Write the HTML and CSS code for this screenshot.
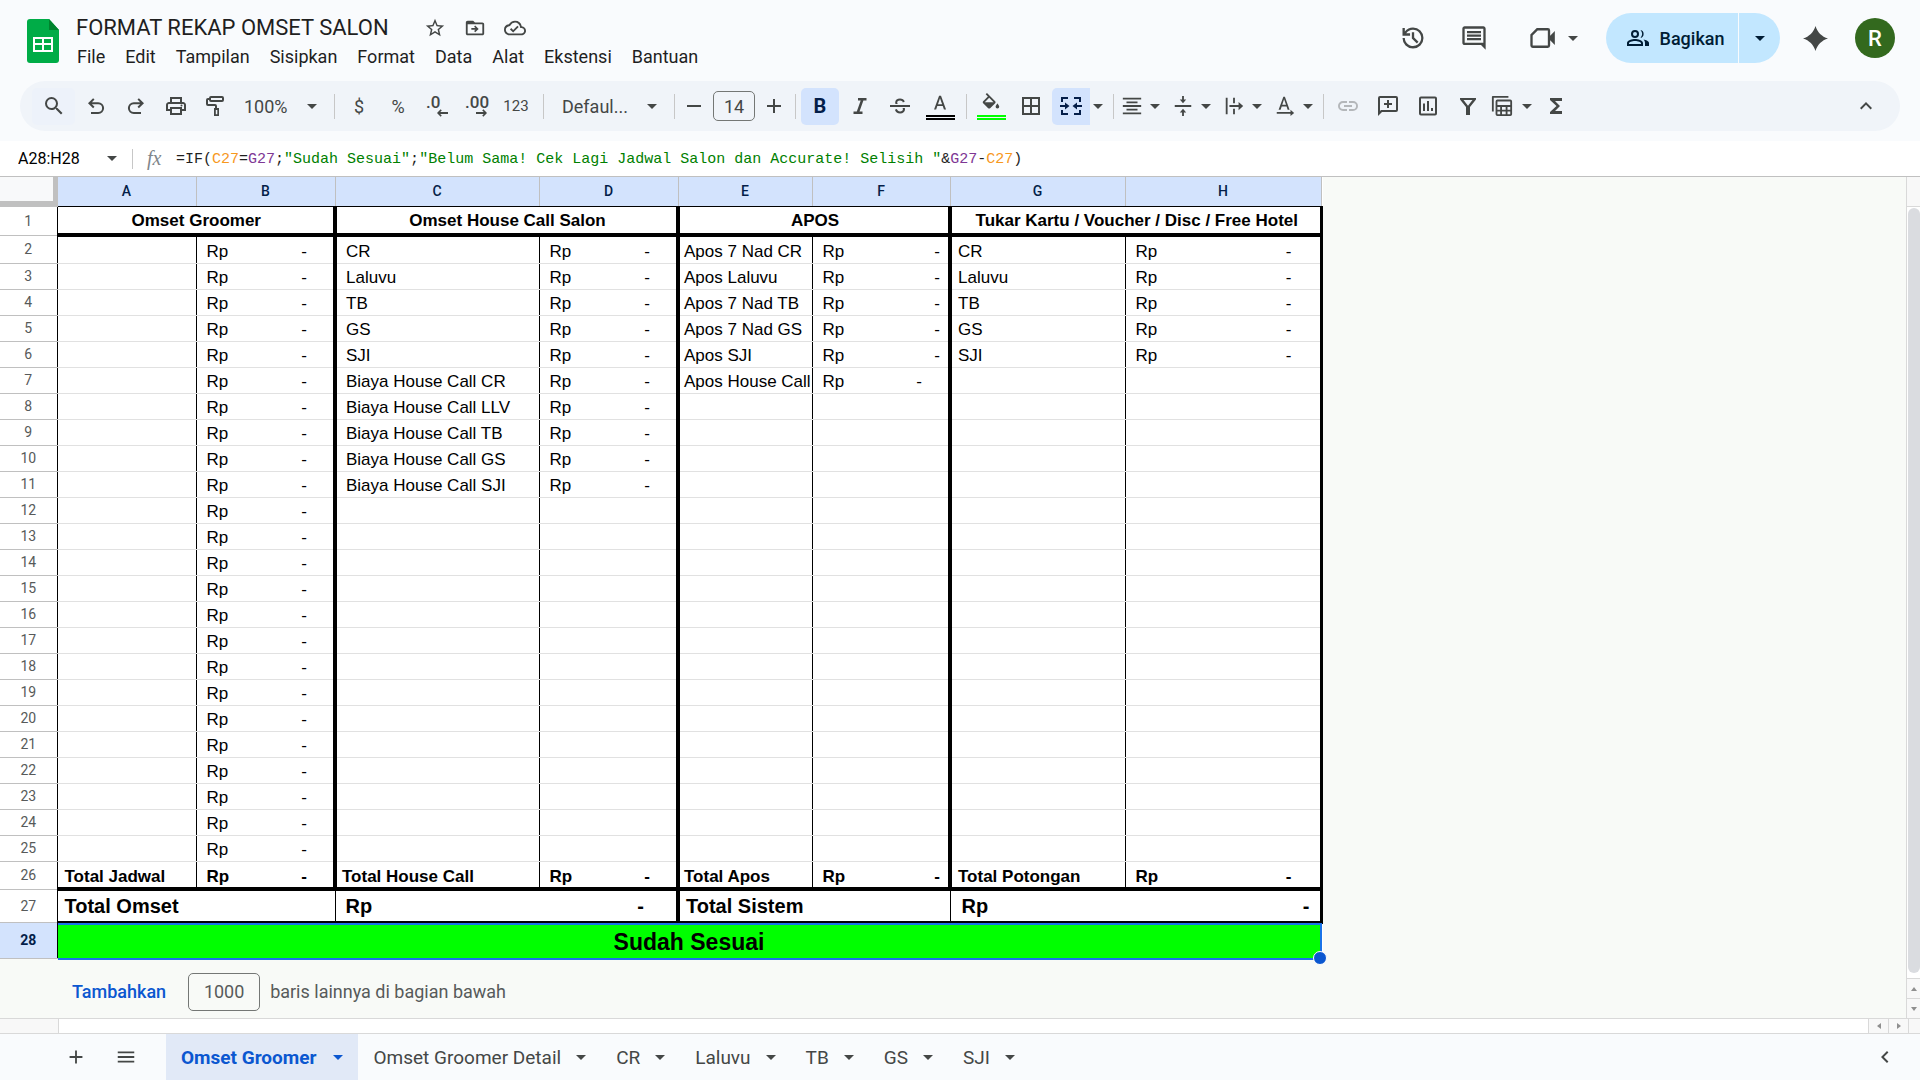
FILE: index.html
```html
<!DOCTYPE html>
<html lang="id">
<head>
  <meta charset="UTF-8" />
  <meta name="viewport" content="width=device-width, initial-scale=1.0"/>
  <title>FORMAT REKAP OMSET SALON</title>
  <link rel="stylesheet" href="styles.css">
</head>
<body>

  <header class="header">
    <svg class="logo" viewBox="0 0 32 44">
      <path fill="#00ac47" d="M3 0h19l10 11v30a3 3 0 0 1-3 3H3a3 3 0 0 1-3-3V3a3 3 0 0 1 3-3z"/>
      <path fill="#00832d" d="M22 0l10 11H22z"/>
      <path fill="#fff" fill-rule="evenodd" d="M6 18h20v15H6zM8 20v4h7v-4zM17 20v4h7v-4zM8 26v5h7v-5zM17 26v5h7v-5z"/>
    </svg>

    <div class="doc">
      <div class="title-row">
        <h1>FORMAT REKAP OMSET SALON</h1>
        <button class="mini" aria-label="Bintangi">
          <svg viewBox="0 0 24 24"><path d="M22 9.24l-7.19-.62L12 2 9.19 8.63 2 9.24l5.46 4.73L5.82 21 12 17.27 18.18 21l-1.63-7.03L22 9.24zM12 15.4l-3.76 2.27 1-4.28-3.32-2.88 4.38-.38L12 6.1l1.71 4.04 4.38.38-3.32 2.88 1 4.28L12 15.4z"/></svg>
        </button>
        <button class="mini" aria-label="Pindahkan">
          <svg viewBox="0 0 24 24"><path d="M20 6h-8l-2-2H4c-1.1 0-2 .9-2 2v12c0 1.1.9 2 2 2h16c1.1 0 2-.9 2-2V8c0-1.1-.9-2-2-2zm0 12H4V8h16v10zM12.2 16.6l3.8-3.6-3.8-3.6-1.2 1.2 1.5 1.5H8v1.8h4.5L11 15.400z"/></svg>
        </button>
        <button class="mini" aria-label="Status dokumen">
          <svg viewBox="0 0 24 24"><path d="M19.350 10.040A7.490 7.490 0 0 0 12 4C9.110 4 6.600 5.640 5.350 8.040A5.994 5.994 0 0 0 0 14c0 3.310 2.690 6 6 6h13c2.760 0 5-2.240 5-5 0-2.640-2.050-4.780-4.650-4.960zM19 18H6c-2.210 0-4-1.790-4-4 0-2.050 1.530-3.760 3.560-3.970l1.070-.11.5-.95A5.469 5.469 0 0 1 12 6c2.620 0 4.880 1.860 5.390 4.430l.3 1.500 1.530.11A2.980 2.980 0 0 1 22 15c0 1.650-1.350 3-3 3zm-9-3.820l-2.090-2.090L6.500 13.500 10 17l6.010-6.010-1.410-1.410z"/></svg>
        </button>
      </div>
      <nav class="menu">
        <button>File</button>
        <button>Edit</button>
        <button>Tampilan</button>
        <button>Sisipkan</button>
        <button>Format</button>
        <button>Data</button>
        <button>Alat</button>
        <button>Ekstensi</button>
        <button>Bantuan</button>
      </nav>
    </div>

    <div class="actions">
      <button class="action" aria-label="Histori">
        <svg viewBox="0 0 24 24"><path d="M12 3a9 9 0 0 0-7 3.350V3.500H3V10h6.500V8H6.200A7 7 0 1 1 5 12H3a9 9 0 1 0 9-9zm-1 4v5.400l4.300 4.300 1.400-1.400-3.700-3.700V7z"/></svg>
      </button>
      <button class="action" aria-label="Komentar">
        <svg viewBox="0 0 24 24"><path d="M21.990 4c0-1.100-.89-2-1.990-2H4c-1.100 0-2 .9-2 2v12c0 1.100.9 2 2 2h14l4 4-.010-18zM20 4v12H4V4h16zM6 12h12v2H6zm0-3h12v2H6zm0-3h12v2H6z"/></svg>
      </button>
      <button class="action meet" aria-label="Rapat">
        <svg viewBox="0 0 24 24"><path fill-rule="evenodd" d="M7.500 3.500L2 9v9.500a2 2 0 0 0 2 2h13a2 2 0 0 0 2-2v-4.500l4 4V6l-4 4V5.500a2 2 0 0 0-2-2zM8.300 5.500H17v13H4V9.800z"/></svg>
        <span class="caret"></span>
      </button>
      <div class="share">
        <button class="share-main">
          <svg viewBox="0 0 24 24"><path d="M9 4a4 4 0 1 0 0 8 4 4 0 0 0 0-8zm0 2a2 2 0 1 1 0 4 2 2 0 0 1 0-4zM9 13c-2.700 0-8 1.300-8 4v3h16v-3c0-2.700-5.300-4-8-4zm6 5H3v-1c0-.6 3-2 6-2s6 1.400 6 2zM14.500 4.100a4 4 0 0 1 0 7.800 6 6 0 0 0 0-7.800zM17.500 13.500C20 14 23 15.200 23 17v3h-4v-3c0-1.500-.6-2.600-1.500-3.500z"/></svg>
          Bagikan
        </button>
        <button class="share-more" aria-label="Opsi bagikan"><span class="caret"></span></button>
      </div>
      <button class="action spark" aria-label="Gemini">
        <svg viewBox="0 0 24 24"><path d="M12 0c1.800 6 6 10.200 12 12-6 1.800-10.200 6-12 12-1.800-6-6-10.200-12-12C6 10.200 10.200 6 12 0z"/></svg>
      </button>
      <button class="avatar" aria-label="Akun">R</button>
    </div>
  </header>

  <div class="toolbar">
    <div class="group">
      <button class="tool search" aria-label="Telusuri">
        <svg viewBox="0 0 24 24"><path d="M15.500 14h-.79l-.28-.27A6.470 6.470 0 0 0 16 9.500 6.500 6.500 0 1 0 9.500 16c1.610 0 3.090-.59 4.230-1.570l.27.280v.79l5 4.990L20.490 19l-4.990-5zm-6 0C7.010 14 5 11.990 5 9.500S7.010 5 9.500 5 14 7.010 14 9.500 11.990 14 9.500 14z"/></svg>
      </button>
      <button class="tool" aria-label="Urungkan">
        <svg viewBox="0 0 24 24"><path d="M7 20v-2h7.200a3.900 3.900 0 0 0 0-7.800H7.900l2.600 2.600-1.400 1.400L4 9.200l5.100-5 1.400 1.400-2.600 2.600h6.300a5.900 5.900 0 0 1 0 11.800z"/></svg>
      </button>
      <button class="tool" aria-label="Ulangi">
        <svg viewBox="0 0 24 24"><path d="M17 20v-2H9.800a3.900 3.900 0 0 1 0-7.800h6.300l-2.600 2.600 1.400 1.400L20 9.200l-5.100-5-1.400 1.400 2.600 2.600H9.800a5.900 5.900 0 0 0 0 11.800z"/></svg>
      </button>
      <button class="tool" aria-label="Cetak">
        <svg viewBox="0 0 24 24"><path d="M19 8h-1V3H6v5H5c-1.660 0-3 1.340-3 3v6h4v4h12v-4h4v-6c0-1.660-1.340-3-3-3zM8 5h8v3H8zm8 14H8v-4h8zm2-4v-2H6v2H4v-4c0-.55.450-1 1-1h14c.55 0 1 .450 1 1v4z"/><circle cx="17.500" cy="11.500" r="1"/></svg>
      </button>
      <button class="tool" aria-label="Format cat">
        <svg viewBox="0 0 24 24"><path d="M18 2H7a2 2 0 0 0-2 2H4a2 2 0 0 0-2 2v4a2 2 0 0 0 2 2h7v2h-1v8h5v-8h-2v-2a2 2 0 0 0-2-2H4V6h1a2 2 0 0 0 2 2h11a2 2 0 0 0 2-2V4a2 2 0 0 0-2-2zM7 4h11v2H7zM11.800 16h1.500v4.300h-1.500z"/></svg>
      </button>
      <label class="drop zoom">
        <select aria-label="Zoom"><option>100%</option></select>
        <span class="caret"></span>
      </label>
    </div>
    <span class="line"></span>
    <div class="group tight">
      <button class="tool text">$</button>
      <button class="tool text">%</button>
      <button class="tool decimal" aria-label="Kurangi desimal">
        <span>.0</span>
        <svg viewBox="0 0 12 8"><path d="M4 0l1.200 1.200L3.500 3H12v2H3.500l1.700 1.800L4 8 0 4z"/></svg>
      </button>
      <button class="tool decimal" aria-label="Tambah desimal">
        <span>.00</span>
        <svg viewBox="0 0 12 8"><path d="M8 0L6.800 1.200 8.500 3H0v2h8.500L6.800 6.800 8 8l4-4z"/></svg>
      </button>
      <button class="tool text digits">123</button>
    </div>
    <span class="line"></span>
    <label class="drop font">
      <select aria-label="Font"><option>Defaul...</option></select>
      <span class="caret"></span>
    </label>
    <span class="line"></span>
    <button class="step" aria-label="Perkecil ukuran font">
      <svg viewBox="0 0 24 24"><path d="M5 11h14v2H5z"/></svg>
    </button>
    <input class="size" type="text" value="14" aria-label="Ukuran font">
    <button class="step" aria-label="Perbesar ukuran font">
      <svg viewBox="0 0 24 24"><path d="M11 5h2v6h6v2h-6v6h-2v-6H5v-2h6z"/></svg>
    </button>
    <span class="line"></span>
    <div class="group">
      <button class="tool active bold">B</button>
      <button class="tool" aria-label="Miring">
        <svg viewBox="0 0 24 24"><path d="M10 4v2.500h2.700L8.800 17.500H5.500V20h9v-2.500h-3L15.400 6.500h3.100V4z"/></svg>
      </button>
      <button class="tool" aria-label="Coret">
        <svg viewBox="0 0 24 24"><path d="M2 11h20v2H2zM12 4.500c-2.800 0-4.800 1.600-4.800 4 0 .6.100 1 .3 1.500h2.300c-.4-.4-.6-.9-.6-1.500 0-1.200 1.100-2 2.800-2 1.500 0 2.500.7 2.900 1.900l1.900-.8c-.7-2-2.500-3.100-4.800-3.100zM14.500 14c.3.400.4.800.4 1.300 0 1.300-1.100 2.200-2.800 2.200-1.600 0-2.800-.9-3.200-2.500l-2 .8c.6 2.300 2.500 3.700 5.200 3.700 2.900 0 4.900-1.700 4.900-4.200 0-.5-.1-.9-.2-1.300z"/></svg>
      </button>
      <button class="tool color" aria-label="Warna teks">
        <svg viewBox="0 0 24 24"><path d="M11 3L5.500 18h2.300l1.300-3.800h5.900l1.300 3.800h2.300L13.100 3zm-1.200 9.200L12 5.800l2.300 6.400z"/></svg>
        <span class="swatch"></span>
      </button>
    </div>
    <span class="line"></span>
    <div class="group">
      <button class="tool color fill" aria-label="Warna isi">
        <svg viewBox="0 0 24 24"><path d="M16.560 8.940L7.620 0 6.210 1.410l2.380 2.380-5.150 5.150c-.59.590-.59 1.540 0 2.120l5.500 5.500c.290.290.680.440 1.060.440s.770-.15 1.060-.44l5.500-5.500c.590-.58.590-1.530 0-2.120zM5.210 10L10 5.210 14.790 10zM19 11.500s-2 2.170-2 3.500a2 2 0 0 0 4 0c0-1.330-2-3.500-2-3.500z"/></svg>
        <span class="swatch"></span>
      </button>
      <button class="tool" aria-label="Batas">
        <svg viewBox="0 0 24 24"><path d="M3 3v18h18V3zm8 16H5v-6h6zm0-8H5V5h6zm8 8h-6v-6h6zm0-8h-6V5h6z"/></svg>
      </button>
      <div class="split">
        <button class="tool active merge" aria-label="Gabungkan sel">
          <svg viewBox="0 0 24 24"><path d="M2 3h7v2H4v3H2zM15 3h7v5h-2V5h-5zM2 16h2v3h5v2H2zM20 16h2v5h-7v-2h5zM1 11h5V8.500l4.500 3.500L6 15.500V13H1zM23 11h-5V8.500L13.500 12l4.500 3.500V13h5z"/></svg>
        </button>
        <button class="more" aria-label="Opsi gabungkan"><span class="caret"></span></button>
      </div>
    </div>
    <span class="line"></span>
    <div class="group menus">
      <button class="tool-menu" aria-label="Perataan horizontal">
        <svg viewBox="0 0 24 24"><path d="M2 3h20v2H2zM6 7h12v2H6zM2 11h20v2H2zM6 15h12v2H6zM2 19h20v2H2z"/></svg>
        <span class="caret"></span>
      </button>
      <button class="tool-menu" aria-label="Perataan vertikal">
        <svg viewBox="0 0 24 24"><path d="M3 11h18v2H3zM11 1h2v4h2.500L12 9 8.500 5H11zM11 23h2v-4h2.500L12 15l-3.500 4H11z"/></svg>
        <span class="caret"></span>
      </button>
      <button class="tool-menu" aria-label="Pengemasan teks">
        <svg viewBox="0 0 24 24"><path d="M3 3h2v18H3zM11 3h2v6h-2zM11 15h2v6h-2zM7 11h10V7.500l5 4.500-5 4.500V13H7z"/></svg>
        <span class="caret"></span>
      </button>
      <button class="tool-menu" aria-label="Rotasi teks">
        <svg viewBox="0 0 24 24"><path d="M10.200 2L5 16h2.200l1.200-3.500h5.300l1.200 3.500H17L11.900 2zM9 10.700l2-6 2.100 6zM3 18.500h15V16l4 3.500-4 3.500v-2.500H3z"/></svg>
        <span class="caret"></span>
      </button>
    </div>
    <span class="line"></span>
    <div class="group">
      <button class="tool off" aria-label="Sisipkan link">
        <svg viewBox="0 0 24 24"><path d="M3.900 12c0-1.710 1.390-3.100 3.100-3.100h4V7H7a5 5 0 0 0 0 10h4v-1.900H7c-1.710 0-3.100-1.390-3.100-3.100zM8 13h8v-2H8zm9-6h-4v1.900h4a3.100 3.100 0 0 1 0 6.200h-4V17h4a5 5 0 0 0 0-10z"/></svg>
      </button>
      <button class="tool" aria-label="Sisipkan komentar">
        <svg viewBox="0 0 24 24"><path d="M20 2H4a2 2 0 0 0-2 2v18l4-4h14a2 2 0 0 0 2-2V4a2 2 0 0 0-2-2zm0 14H5l-1 1V4h16zM11 14h2v-3h3V9h-3V6h-2v3H8v2h3z"/></svg>
      </button>
      <button class="tool" aria-label="Sisipkan diagram">
        <svg viewBox="0 0 24 24"><path d="M19 2.500H5A2 2 0 0 0 3 4.500v15a2 2 0 0 0 2 2h14a2 2 0 0 0 2-2v-15a2 2 0 0 0-2-2zm0 17H5v-15h14zM7 9.500h2V17H7zM11 7h2v10h-2zM15 14h2v3h-2z"/></svg>
      </button>
      <button class="tool" aria-label="Filter">
        <svg viewBox="0 0 24 24"><path d="M4 4v1.500L10 13v8h4v-8l6-7.500V4zm3.500 2h9L12 11.700z"/></svg>
      </button>
      <button class="tool-menu views" aria-label="Tampilan tabel">
        <svg viewBox="0 0 24 24"><path d="M2 1h17v2H3v15H1V2a1 1 0 0 1 1-1zM7 5h14a2 2 0 0 1 2 2v14a2 2 0 0 1-2 2H7a2 2 0 0 1-2-2V7a2 2 0 0 1 2-2zm0 2v4h14V7zm0 6v3h3v-3zm5 0v3h4v-3zm6 0v3h3v-3zM7 18v3h3v-3zm5 0v3h4v-3zm6 0v3h3v-3z" fill-rule="evenodd"/></svg>
        <span class="caret"></span>
      </button>
      <button class="tool" aria-label="Fungsi">
        <svg viewBox="0 0 24 24"><path d="M18 4H6v2l6.500 6L6 18v2h12v-3h-7l5-5-5-5h7z"/></svg>
      </button>
    </div>
    <button class="tool collapse" aria-label="Sembunyikan menu">
      <svg viewBox="0 0 24 24"><path d="M12 8l-6 6 1.410 1.410L12 10.830l4.590 4.580L18 14z"/></svg>
    </button>
  </div>

  <div class="formula-bar">
    <label class="name-box">
      <input type="text" value="A28:H28" aria-label="Kotak nama">
      <span class="caret"></span>
    </label>
    <span class="fx">fx</span>
    <div class="formula">=IF(<span class="ref-c">C27</span>=<span class="ref-g">G27</span>;<span class="str">"Sudah Sesuai"</span>;<span class="str">"Belum Sama! Cek Lagi Jadwal Salon dan Accurate! Selisih "</span>&amp;<span class="ref-g">G27</span>-<span class="ref-c">C27</span>)</div>
  </div>

  <main class="sheet">
    <div class="canvas">
      <table class="grid">
        <colgroup>
          <col class="col-num"><col class="col-a"><col class="col-b"><col class="col-c"><col class="col-d">
          <col class="col-e"><col class="col-f"><col class="col-g"><col class="col-h">
        </colgroup>
        <thead>
          <tr>
            <th class="corner"></th>
            <th>A</th><th>B</th><th>C</th><th>D</th><th>E</th><th>F</th><th>G</th><th>H</th>
          </tr>
        </thead>
        <tbody id="rows">
          <tr class="row-title">
            <th>1</th>
            <td colspan="2">Omset Groomer</td>
            <td colspan="2">Omset House Call Salon</td>
            <td colspan="2">APOS</td>
            <td colspan="2">Tukar Kartu / Voucher / Disc / Free Hotel</td>
          </tr>
        </tbody>
        <tbody>
          <tr class="row-sum">
            <th>26</th>
            <td>Total Jadwal</td>
            <td><div class="rp"><span>Rp</span><span>-</span></div></td>
            <td>Total House Call</td>
            <td><div class="rp"><span>Rp</span><span>-</span></div></td>
            <td>Total Apos</td>
            <td><div class="rp end"><span>Rp</span><span>-</span></div></td>
            <td>Total Potongan</td>
            <td><div class="rp"><span>Rp</span><span>-</span></div></td>
          </tr>
          <tr class="row-total">
            <th>27</th>
            <td colspan="2">Total Omset</td>
            <td colspan="2"><div class="rp"><span>Rp</span><span>-</span></div></td>
            <td colspan="2">Total Sistem</td>
            <td colspan="2"><div class="rp end"><span>Rp</span><span>-</span></div></td>
          </tr>
          <tr class="row-status">
            <th>28</th>
            <td colspan="8">Sudah Sesuai<span class="selection"></span></td>
          </tr>
        </tbody>
      </table>

      <div class="add-rows">
        <button>Tambahkan</button>
        <input id="more" type="text" value="1000">
        <label for="more">baris lainnya di bagian bawah</label>
      </div>
    </div>

    <div class="vscroll">
      <div class="vhead"></div>
      <div class="thumb"></div>
      <button aria-label="Atas"><span class="arrow up"></span></button>
      <button aria-label="Bawah"><span class="arrow down"></span></button>
    </div>
  </main>

  <div class="hscroll">
    <div class="hstart"></div>
    <button aria-label="Kiri"><span class="arrow left"></span></button>
    <button aria-label="Kanan"><span class="arrow right"></span></button>
    <div class="hend"></div>
  </div>

  <footer class="tabs">
    <button class="tab-icon" aria-label="Tambahkan sheet">
      <svg viewBox="0 0 24 24"><path d="M11 5h2v6h6v2h-6v6h-2v-6H5v-2h6z"/></svg>
    </button>
    <button class="tab-icon" aria-label="Semua sheet">
      <svg viewBox="0 0 24 24"><path d="M3 6h18v2H3zM3 11h18v2H3zM3 16h18v2H3z"/></svg>
    </button>
    <div class="tab-list">
      <button class="tab current">Omset Groomer<span class="caret"></span></button>
      <button class="tab">Omset Groomer Detail<span class="caret"></span></button>
      <button class="tab">CR<span class="caret"></span></button>
      <button class="tab">Laluvu<span class="caret"></span></button>
      <button class="tab">TB<span class="caret"></span></button>
      <button class="tab">GS<span class="caret"></span></button>
      <button class="tab">SJI<span class="caret"></span></button>
    </div>
    <button class="side" aria-label="Tampilkan panel samping">
      <svg viewBox="0 0 24 24"><path d="M15.410 7.410L14 6l-6 6 6 6 1.410-1.410L10.830 12z"/></svg>
    </button>
  </footer>

  <script src="script.js"></script>
</body>
</html>
```
FILE: styles.css
```css
* {
  box-sizing: border-box;
}

body {
  font-family: Roboto, "Liberation Sans", sans-serif;
  display: flex;
  flex-direction: column;
  height: 100vh;
  margin: 0;
  background-color: #f9fbfd;
  color: #1f1f1f;
  overflow: hidden;
}

button,
input,
select {
  font: inherit;
  color: inherit;
  background: none;
  border: none;
  margin: 0;
  padding: 0;
}

button {
  display: flex;
  align-items: center;
  justify-content: center;
  flex-shrink: 0;
  white-space: nowrap;
  cursor: pointer;
}

svg {
  width: 24px;
  height: 24px;
  flex-shrink: 0;
  fill: #444746;
}

.caret {
  border-left: 5px solid transparent;
  border-right: 5px solid transparent;
  border-top: 5px solid #444746;
}

/* header */

.header {
  display: flex;
  align-items: flex-start;
  height: 81px;
  padding: 12px 25px 0 27px;
}

.header .logo {
  width: 32px;
  height: 44px;
  margin-top: 7px;
}

.doc {
  margin-left: 17px;
}

.title-row {
  display: flex;
  align-items: center;
  height: 31px;
}

h1 {
  margin: 0 26px 0 0;
  font-size: 22px;
  font-weight: 400;
  line-height: 30px;
}

.mini {
  width: 40px;
  height: 30px;
}

.mini svg {
  width: 22px;
  height: 22px;
}

.menu {
  display: flex;
  margin-left: -9px;
}

.menu button {
  height: 26px;
  padding: 0 10px;
  font-size: 18px;
}

.actions {
  display: flex;
  align-items: center;
  height: 52px;
  margin-left: auto;
}

.action {
  width: 50px;
  height: 50px;
  margin-right: 11px;
}

.action svg {
  width: 28px;
  height: 28px;
}

.action.meet {
  width: 72px;
  gap: 12px;
  margin: 0 17px 0 7px;
}

.action.spark {
  margin: 0 15px 0 10px;
}

.action.spark svg {
  width: 25px;
  height: 25px;
}

.share {
  display: flex;
  gap: 1px;
  height: 50px;
}

.share button {
  background-color: #c2e7ff;
  color: #001d35;
}

.share svg {
  fill: #001d35;
}

.share .caret {
  border-top-color: #001d35;
}

.share-main {
  gap: 10px;
  width: 132px;
  border-radius: 25px 0 0 25px;
  font-size: 18px;
  font-weight: 500;
}

.share .share-main {
  padding-left: 6px;
}

.share-more {
  width: 41px;
  border-radius: 0 25px 25px 0;
}

.avatar {
  width: 40px;
  height: 40px;
  border-radius: 50%;
  background-color: #33691e;
  color: #fff;
  font-size: 22px;
  font-weight: 500;
}

/* toolbar */

.toolbar {
  display: flex;
  align-items: center;
  height: 50px;
  margin: 0 20px;
  padding: 0 15px 0 12px;
  border-radius: 25px;
  background-color: #f0f4f9;
  color: #444746;
  font-size: 18px;
  flex-shrink: 0;
}

.group,
.split {
  display: flex;
  align-items: center;
}

.group {
  gap: 2px;
}

.group.tight {
  gap: 1px;
}

.group.menus {
  gap: 7px;
}

.tool {
  width: 38px;
  height: 37px;
  border-radius: 5px;
}

.tool.search {
  width: 43px;
  background-color: #edf2fa;
}

.tool.active {
  background-color: #d3e3fd;
  color: #041e49;
}

.tool.active svg {
  fill: #041e49;
}

.tool.bold {
  font-size: 20px;
  font-weight: 700;
}

.tool.merge {
  border-radius: 5px 0 0 5px;
}

.tool.digits {
  width: 40px;
  font-size: 15px;
}

.tool.off svg {
  fill: #b4b7ba;
}

.tool.decimal {
  flex-direction: column;
  align-items: flex-start;
  padding-left: 8px;
  font-size: 17px;
  font-weight: 500;
  line-height: 14px;
}

.tool.decimal svg {
  width: 11px;
  height: 8px;
  margin-left: 11px;
}

.tool.color {
  flex-direction: column;
}

.tool.color svg {
  width: 22px;
  height: 22px;
}

.swatch {
  width: 29px;
  height: 5px;
  border-top: 2px solid #000;
  border-bottom: 2px solid #000;
}

.fill .swatch {
  border-color: #0f0;
}

.more {
  width: 16px;
  height: 37px;
}

.tool-menu {
  width: 44px;
  height: 37px;
  justify-content: space-between;
  padding: 0 3px 0 2px;
}

.tool-menu svg {
  width: 22px;
  height: 22px;
}

.tool-menu.views {
  width: 46px;
}

.step {
  width: 28px;
  height: 37px;
}

.size {
  width: 42px;
  height: 30px;
  margin: 0 5px;
  border: 1px solid #747775;
  border-radius: 5px;
  text-align: center;
}

.line {
  width: 1px;
  height: 25px;
  margin: 0 5px 0 7px;
  background-color: #c7c7c7;
  flex-shrink: 0;
}

.drop {
  position: relative;
  display: flex;
  align-items: center;
}

.drop select {
  width: 100%;
  height: 37px;
  appearance: none;
}

.drop .caret {
  position: absolute;
  right: 10px;
}

.drop.zoom {
  width: 90px;
  padding-left: 7px;
}

.drop.font {
  width: 118px;
  padding-left: 13px;
}

.collapse {
  margin-left: auto;
}

/* formula bar */

.formula-bar {
  display: flex;
  align-items: center;
  height: 36px;
  margin-top: 10px;
  padding-left: 18px;
  border-bottom: 1px solid #c0c0c0;
  background-color: #fff;
  flex-shrink: 0;
}

.name-box {
  display: flex;
  align-items: center;
  justify-content: space-between;
  width: 115px;
  height: 20px;
  padding-right: 15px;
  border-right: 1px solid #c7c7c7;
}

.name-box input {
  width: 76px;
  color: #000;
  font-size: 16px;
}

.fx {
  width: 43px;
  padding-left: 14px;
  color: #80868b;
  font-family: "Liberation Serif", serif;
  font-size: 20px;
  font-style: italic;
}

.formula {
  padding-top: 2px;
  font-family: "Liberation Mono", monospace;
  font-size: 15px;
  line-height: 20px;
  white-space: pre;
}

.ref-c {
  color: #f7981d;
}

.ref-g {
  color: #7e3794;
}

.str {
  color: #008000;
}

/* sheet */

.sheet {
  display: flex;
  flex: 1;
  min-height: 0;
}

.canvas {
  flex: 1;
  background-color: #f8faf7;
}

.grid {
  width: 1321px;
  table-layout: fixed;
  border-collapse: collapse;
  background-color: #fff;
  font-family: "Liberation Sans", Arial, sans-serif;
  font-size: 17px;
  line-height: 20px;
  color: #000;
}

.col-num { width: 57px; }
.col-a,
.col-b,
.col-d { width: 139px; }
.col-c { width: 204px; }
.col-e { width: 134px; }
.col-f { width: 138px; }
.col-g { width: 175px; }
.col-h { width: 196px; }

.grid tr {
  height: 26px;
}

.grid th {
  padding: 0;
  border-bottom: 1px solid #c0c0c0;
  color: #575a5a;
  font-family: Roboto, sans-serif;
  font-size: 14px;
  font-weight: 400;
  line-height: 18px;
}

.grid thead tr {
  height: 29px;
}

.grid thead th {
  border-right: 1px solid #c0c0c0;
  background-color: #d3e3fd;
  color: #041e49;
  font-weight: 500;
}

.grid thead th:not(.corner) {
  border-bottom-color: #000;
}

.grid thead .corner {
  background-color: #f8f9fa;
  box-shadow: inset -4px -5px 0 #c0c0c0;
}

.grid td {
  padding: 0 0 1px 7px;
  border-bottom: 1px solid #e1e1e1;
  border-right: 1px solid #000;
  vertical-align: bottom;
  white-space: nowrap;
}

.grid td:nth-child(2) {
  border-left: 1px solid #000;
}

.grid td:nth-child(4) {
  padding-left: 9px;
}

.grid td:nth-child(6) {
  padding-left: 4px;
}

.grid td:nth-child(8) {
  padding-left: 6px;
}

.grid td:nth-child(odd) {
  border-right: 4px solid #000;
}

.grid td:nth-child(9) {
  border-right-width: 3px;
}

.rp {
  display: flex;
  justify-content: space-between;
  padding: 0 26px 0 3px;
}

td:last-child .rp {
  padding-right: 28px;
}

.rp.end {
  padding-right: 8px;
}

.grid .row-title {
  height: 29px;
}

.grid .row-title td {
  padding: 0 0 2px 2px;
  border-right: 4px solid #000;
  border-bottom: 4px solid #000;
  font-weight: 700;
  text-align: center;
}

.grid .row-title td:last-child,
.grid .row-total td:last-child {
  border-right-width: 3px;
}

.grid .row-first,
.grid .row-sum {
  height: 28px;
}

.row-sum,
.row-total,
.row-status {
  font-weight: 700;
}

.grid .row-sum td {
  padding-bottom: 0;
  border-bottom: 4px solid #000;
}

.grid .row-sum td:nth-child(4) {
  padding-left: 5px;
}

.grid .row-total {
  height: 33px;
}

.grid .row-total td {
  padding-bottom: 3px;
  border-right: 1px solid #000;
  border-bottom: 3px solid #000;
  font-size: 20px;
  line-height: 24px;
}

.grid .row-total td:nth-child(3) {
  padding-left: 7px;
  border-right: 4px solid #000;
}

.grid .row-total td:nth-child(3) .rp {
  padding-right: 32px;
}

.grid .row-total td:nth-child(4) {
  padding-left: 6px;
}

.grid .row-total td:last-child {
  padding-left: 8px;
}

.grid .row-total .rp.end {
  padding-right: 10px;
}

.grid .row-status {
  height: 36px;
}

.grid .row-status td {
  position: relative;
  padding: 0 0 1px;
  border: 1px solid #000;
  background-color: #0f0;
  font-size: 23px;
  line-height: 30px;
  text-align: center;
}

.grid .row-status th {
  background-color: #d3e3fd;
  color: #041e49;
  font-weight: 700;
}

.selection {
  position: absolute;
  inset: -1px -1px -2px 0;
  border: 2px solid #1a73e8;
  border-left: none;
}

.selection::after {
  content: "";
  position: absolute;
  right: -7px;
  bottom: -7px;
  width: 12px;
  height: 12px;
  border: 1px solid #fff;
  border-radius: 50%;
  background-color: #0b57d0;
}

.add-rows {
  display: flex;
  align-items: center;
  padding: 14px 0 0 72px;
  color: #575a5a;
  font-size: 18px;
}

.add-rows button {
  color: #0b57d0;
  font-weight: 500;
}

.add-rows input {
  width: 72px;
  height: 38px;
  margin: 0 10px 0 22px;
  border: 1px solid #747775;
  border-radius: 5px;
  text-align: center;
}

/* scrollbars */

.vscroll {
  display: flex;
  flex-direction: column;
  width: 14px;
  border-left: 1px solid #d9d9d9;
  background-color: #fff;
}

.vscroll .vhead {
  height: 30px;
  border-bottom: 1px solid #d9d9d9;
  background-color: #f8f8f8;
}

.vscroll .thumb {
  flex: 1;
  margin: 1px 0 5px 1px;
  border-radius: 6px;
  background-color: #dadce0;
}

.vscroll button {
  height: 20px;
  border-top: 1px solid #d9d9d9;
  background-color: #f8f8f8;
}

.hscroll {
  display: flex;
  height: 16px;
  border-top: 1px solid #d9d9d9;
  border-bottom: 1px solid #d9d9d9;
  background-color: #fff;
  flex-shrink: 0;
}

.hscroll .hstart {
  width: 59px;
  margin-right: auto;
  border-right: 1px solid #d9d9d9;
  background-color: #f8f8f8;
}

.hscroll button,
.hscroll .hend {
  width: 20px;
  border-left: 1px solid #d9d9d9;
  background-color: #f8f8f8;
}

.hscroll .hend {
  width: 12px;
}

.arrow {
  border: 3px solid transparent;
}

.arrow.up {
  border-top: none;
  border-bottom: 4px solid #8f8f8f;
}

.arrow.down {
  border-bottom: none;
  border-top: 4px solid #8f8f8f;
}

.arrow.left {
  border-left: none;
  border-right: 4px solid #8f8f8f;
}

.arrow.right {
  border-right: none;
  border-left: 4px solid #8f8f8f;
}

/* sheet tabs */

.tabs {
  display: flex;
  height: 46px;
  padding: 0 23px 0 51px;
  color: #444746;
  font-size: 19px;
  flex-shrink: 0;
}

.tab-icon {
  width: 50px;
}

.tab-icon svg {
  width: 22px;
  height: 22px;
}

.tab-list {
  display: flex;
  margin-left: 15px;
}

.tab {
  gap: 15px;
  padding: 0 15px;
}

.tab.current {
  gap: 17px;
  background-color: #e1e9f7;
  color: #0b57d0;
  font-weight: 700;
}

.tab.current .caret {
  border-top-color: #0b57d0;
}

.side {
  margin-left: auto;
}
```
FILE: script.js
```js
const call = ['CR', 'Laluvu', 'TB', 'GS', 'SJI',
  'Biaya House Call CR', 'Biaya House Call LLV', 'Biaya House Call TB',
  'Biaya House Call GS', 'Biaya House Call SJI'];
const apos = ['Apos 7 Nad CR', 'Apos Laluvu', 'Apos 7 Nad TB', 'Apos 7 Nad GS',
  'Apos SJI', 'Apos House Call'];
const potongan = ['CR', 'Laluvu', 'TB', 'GS', 'SJI'];

function rp(show, end) {
  if (!show) return '';
  return '<div class="rp' + (end ? ' end' : '') + '"><span>Rp</span><span>-</span></div>';
}

let html = '';
for (let i = 0; i < 24; i++) {
  html += '<tr' + (i === 0 ? ' class="row-first"' : '') + '>' +
    '<th>' + (i + 2) + '</th>' +
    '<td></td>' +
    '<td>' + rp(true) + '</td>' +
    '<td>' + (call[i] || '') + '</td>' +
    '<td>' + rp(call[i]) + '</td>' +
    '<td>' + (apos[i] || '') + '</td>' +
    '<td>' + rp(apos[i], i < 5) + '</td>' +
    '<td>' + (potongan[i] || '') + '</td>' +
    '<td>' + rp(potongan[i]) + '</td>' +
    '</tr>';
}
document.getElementById('rows').insertAdjacentHTML('beforeend', html);
```
